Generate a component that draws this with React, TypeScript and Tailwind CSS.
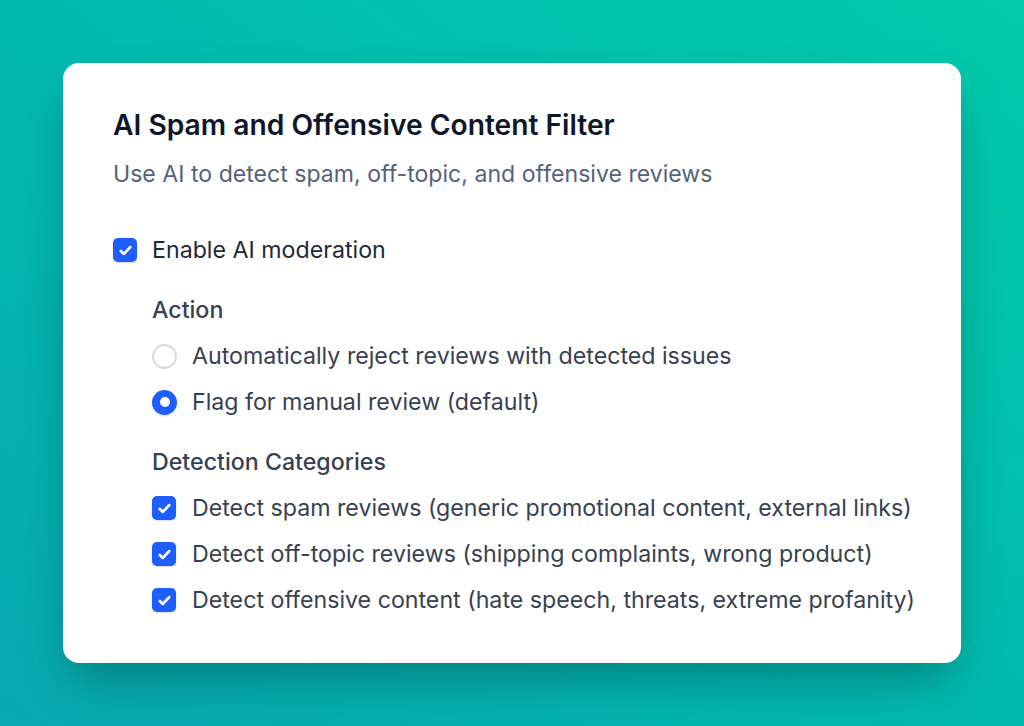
import React from "react";

function CheckBox() {
  return (
    <span className="flex h-[24px] w-[24px] shrink-0 items-center justify-center rounded-[5px] bg-[#1e5eff] shadow-[0_1px_2px_rgba(0,0,0,0.15)]">
      <svg width="17" height="17" viewBox="0 0 16 16" fill="none">
        <path d="M3.6 8.4l2.9 2.8 5.9-6.4" stroke="white" strokeWidth="2.6" strokeLinecap="round" strokeLinejoin="round" />
      </svg>
    </span>
  );
}

function Radio({ checked }: { checked?: boolean }) {
  return checked ? (
    <span className="flex h-[25px] w-[25px] shrink-0 items-center justify-center rounded-full bg-[#1e5eff] shadow-[0_1px_2px_rgba(0,0,0,0.15)]">
      <span className="h-[10px] w-[10px] rounded-full bg-white" />
    </span>
  ) : (
    <span className="h-[25px] w-[25px] shrink-0 rounded-full border-2 border-[#d5d9e0] bg-white" />
  );
}

function Row({ control, label, tone = "text-[#374151]", gap = "gap-[15px]" }: { control: React.ReactNode; label: string; tone?: string; gap?: string }) {
  return (
    <div className={`flex h-[28px] items-center ${gap}`}>
      {control}
      <span className={`whitespace-nowrap text-[23.2px] leading-[28px] ${tone}`}>{label}</span>
    </div>
  );
}

export default function App() {
  return (
    <div
      className="flex h-[726px] w-full items-center justify-center bg-gradient-to-tr from-[#07a9b2] to-[#00cbaa]"
      style={{ fontFamily: "Inter, 'Noto Sans', sans-serif" }}
    >
      <div className="w-[898px] rounded-[16px] bg-white px-[50px] pb-[49px] pt-[46px] shadow-[0_24px_48px_-10px_rgba(0,60,60,0.45)]">
        <h1 className="text-[28.2px] font-semibold leading-[32px] text-[#0f172a]">
          AI Spam and Offensive Content Filter
        </h1>
        <p className="mt-[19px] text-[23.1px] leading-[28px] text-[#55627a]">
          Use AI to detect spam, off-topic, and offensive reviews
        </p>

        <div className="mt-[48px]">
          <Row control={<CheckBox />} label="Enable AI moderation" tone="text-[#1f2937]" />
        </div>

        <div className="ml-[39px]">
          <h2 className="mt-[32px] text-[23.2px] font-medium leading-[28px] text-[#374151]">Action</h2>
          <div className="mt-[18px] flex flex-col gap-[18px]">
            <Row control={<Radio />} label="Automatically reject reviews with detected issues" gap="gap-[15px]" />
            <Row control={<Radio checked />} label="Flag for manual review (default)" gap="gap-[15px]" />
          </div>

          <h2 className="mt-[32px] text-[23.2px] font-medium leading-[28px] text-[#374151]">Detection Categories</h2>
          <div className="mt-[18px] flex flex-col gap-[18px]">
            <Row control={<CheckBox />} label="Detect spam reviews (generic promotional content, external links)" gap="gap-[16px]" />
            <Row control={<CheckBox />} label="Detect off-topic reviews (shipping complaints, wrong product)" gap="gap-[16px]" />
            <Row control={<CheckBox />} label="Detect offensive content (hate speech, threats, extreme profanity)" gap="gap-[16px]" />
          </div>
        </div>
      </div>
    </div>
  );
}
